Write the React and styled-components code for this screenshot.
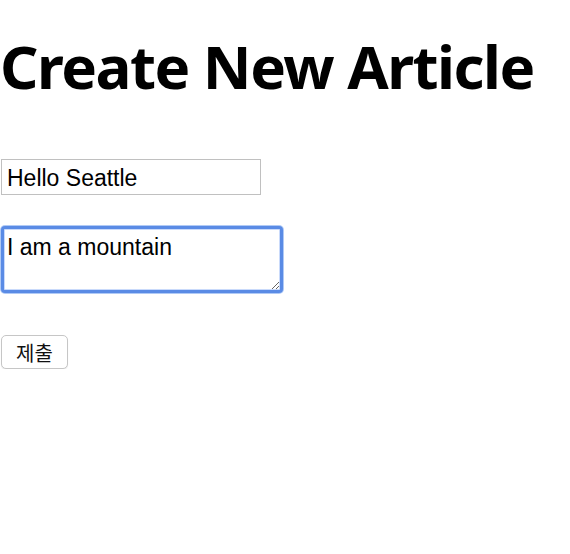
import React from "react";
import styled, { createGlobalStyle } from "styled-components";

const Global = createGlobalStyle`
  html, body { margin: 0; padding: 0; background: #fff; }
  body { font-family: "Noto Sans", "Noto Sans CJK KR", sans-serif; }
`;

const Page = styled.div`
  display: flex;
  flex-direction: column;
  align-items: flex-start;
`;

const Title = styled.h1`
  margin: 16px 0 0 0;
  font-family: "Noto Sans", sans-serif;
  font-weight: 700;
  font-size: 60px;
  line-height: 100px;
  letter-spacing: -1.5px;
  color: #000;
`;

const Form = styled.form`
  display: flex;
  flex-direction: column;
  align-items: flex-start;
  margin-top: 43px;
`;

const Field = styled.div`
  margin-bottom: ${(p) => p.$gap}px;
  display: flex;
`;

const TextInput = styled.input`
  box-sizing: border-box;
  width: 260px;
  height: 36px;
  margin: 0 0 0 1px;
  padding: 2px 5px 0;
  border: 1px solid #c0c0c0;
  font-family: "Liberation Sans", "Helvetica", sans-serif;
  font-size: 23px;
  color: #000;
  outline: none;
`;

const TextArea = styled.textarea`
  box-sizing: border-box;
  width: 282px;
  height: 67px;
  margin: -1px 0 0 1px;
  padding: 5px 3px;
  border: 3px solid #5a8be5;
  border-radius: 4px;
  box-shadow: 0 0 0 1px #b0caf6, inset 0 0 0 1px #c9dafb;
  font-family: "Liberation Sans", "Helvetica", sans-serif;
  font-size: 23px;
  line-height: 27px;
  color: #000;
  outline: none;
  resize: both;
`;

const Submit = styled.button`
  box-sizing: border-box;
  margin-left: 1px;
  width: 67px;
  height: 34px;
  padding: 0;
  background: #fff;
  border: 1px solid #c6c6c6;
  border-radius: 5px;
  box-shadow: 0 1px 1px rgba(0,0,0,0.08);
  font-family: "Noto Sans CJK KR", sans-serif;
  font-size: 20px;
  color: #111;
`;

export default function App() {
  return (
    <Page>
      <Global />
      <Title>Create New Article</Title>
      <Form onSubmit={(e) => e.preventDefault()}>
        <Field $gap={32}>
          <TextInput defaultValue="Hello Seattle" />
        </Field>
        <Field $gap={42}>
          <TextArea defaultValue="I am a mountain" />
        </Field>
        <Submit type="submit">제출</Submit>
      </Form>
    </Page>
  );
}
